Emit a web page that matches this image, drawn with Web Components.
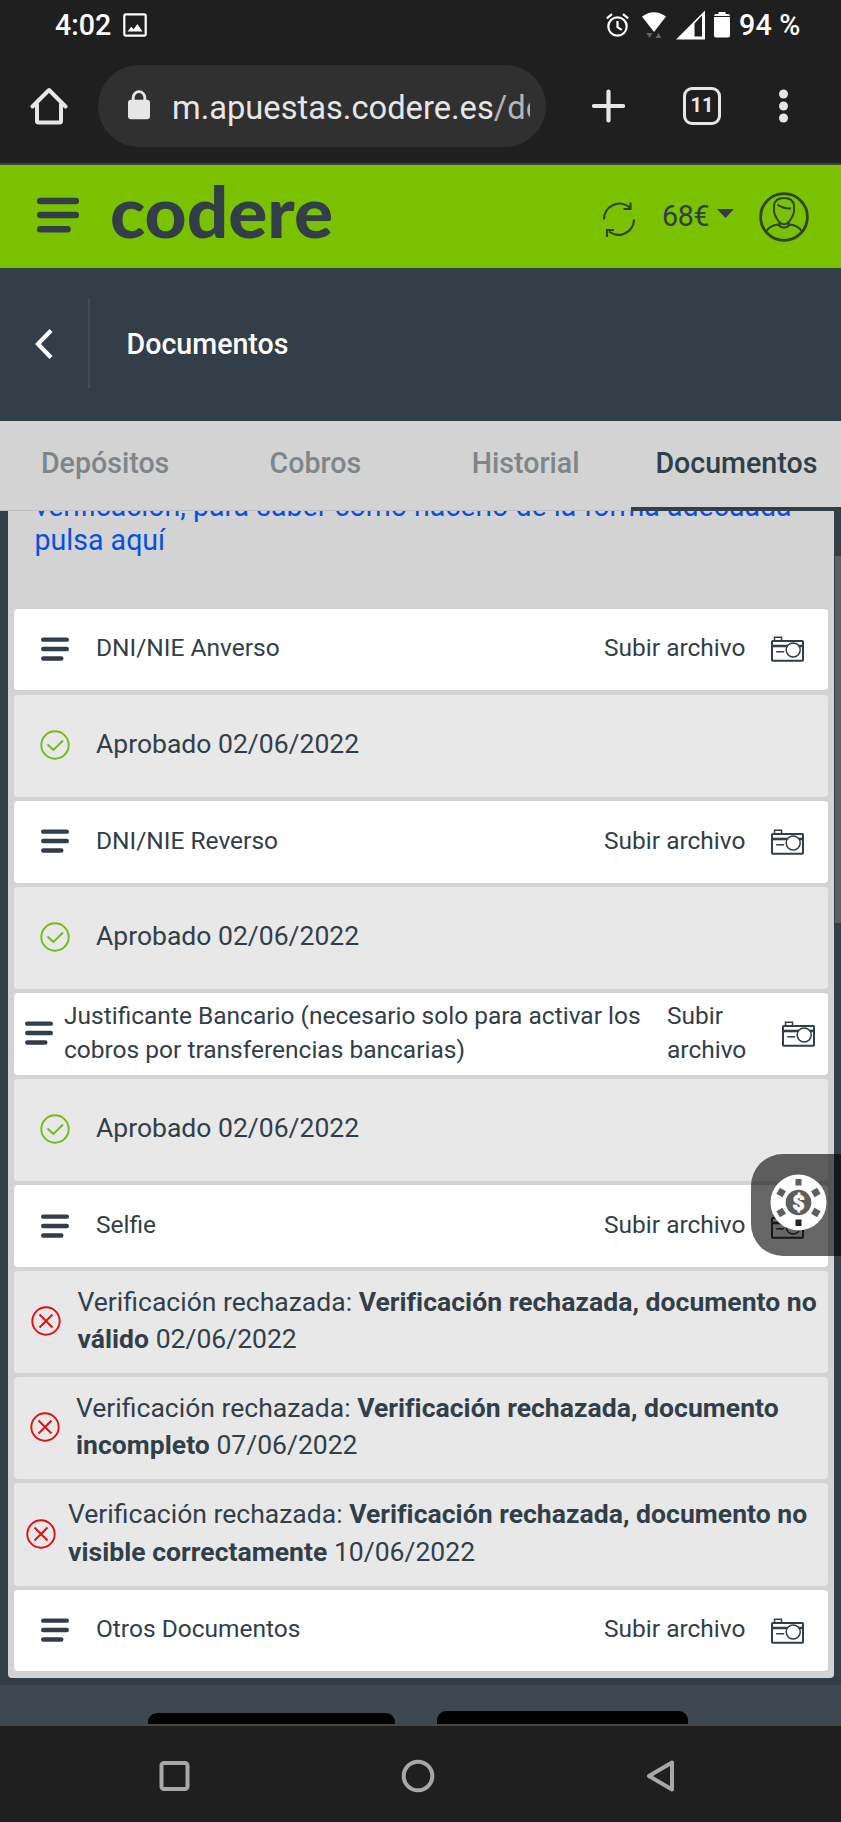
<!DOCTYPE html>
<html lang="es">
<head>
<meta charset="utf-8">
<title>Documentos</title>
<style>
html,body{margin:0;padding:0;background:#1f1f1f}
body{width:841px;height:1822px;overflow:hidden;font-family:Roboto,"Liberation Sans",sans-serif;color:#323e48}
</style>
</head>
<body>
<phone-screen></phone-screen>
<script>
function define(name, html){
  const t=document.createElement('template');t.innerHTML=html;
  customElements.define(name,class extends HTMLElement{
    constructor(){super();this.attachShadow({mode:'open'}).appendChild(t.content.cloneNode(true));}
  });
}

define('status-bar',`<style>
:host{display:flex;height:52px;align-items:center;color:#fff;font-weight:500;font-size:28.6px;box-sizing:border-box;padding:0 41px 2px 55px}
svg{display:block;flex:none}
.pic{margin-left:12px}.sp{flex:1}
.al{margin-right:12px}.wf{margin-right:8px}.sg{margin-right:7px}.bt{margin-right:8px}
span{line-height:34px;white-space:nowrap}.p{width:61px;letter-spacing:.2px}
</style>
<span>4:02</span>
<svg class="pic" width="24" height="24" viewBox="0 0 24 24"><rect x="1.3" y="1.3" width="21.4" height="21.4" rx="1.6" fill="none" stroke="#fff" stroke-width="2.2"/><path fill="#fff" d="M4.5 18.500l3.700-4.700 2.500 2.500 3.700-5.300 5.100 7.500z"/></svg>
<div class="sp"></div>
<svg class="al" width="23" height="24" viewBox="0 0 23 24" fill="none" stroke="#fff" stroke-width="2.2"><circle cx="11.500" cy="13.500" r="9.200"/><path d="M11.500 8v6.200l4.300 2.700M.8 5.300L6 1.200M22.200 5.300L17 1.200"/></svg>
<svg class="wf" width="26" height="28" viewBox="0 0 26 28"><path fill="#fff" d="M1 5.500Q13-3 25 5.500L13 21z"/><path fill="#666" d="M5.500 22h6l-3 5zM14.500 27h6l-3-5z"/></svg>
<svg class="sg" width="31" height="30" viewBox="0 0 31 30"><path fill="#fff" fill-rule="evenodd" d="M30 .5v29H1zM19.500 13.500v13H27V5.500z"/></svg>
<svg class="bt" width="18" height="28" viewBox="0 0 18 28"><path fill="#fff" d="M5.500 1h7v2H15q2 0 2 2H1q0-2 2-2h2.500zM1 6h16v18.500q0 2-2 2H3q-2 0-2-2z"/></svg>
<span class="p">94 %</span>`);

define('browser-bar',`<style>
:host{display:flex;height:113px;box-sizing:border-box;border-bottom:2px solid #3f4436;padding:13px 36px 0 30px;align-items:flex-start;color:#e6e6e6}
svg{display:block;flex:none}
.home{margin:22px 30px 0 0}
.pill{width:448px;height:82px;border-radius:41px;background:#303030;display:flex;align-items:center;box-sizing:border-box;padding:0 16px 0 29px}
.lock{margin:-3px 21px 0 0}
.url{flex:1;overflow:hidden;white-space:nowrap;font-size:32.66px;line-height:44px;margin-top:3px}
.url i{font-style:normal;color:#b5b5b5}
.plus{margin:24px 0 0 46px}
.tabs{width:38px;height:38px;border:3.500px solid #e6e6e6;border-radius:9px;box-sizing:border-box;margin:22px 0 0 58px;font-weight:700;font-size:20px;line-height:31px;text-align:center;flex:none}
.more{margin:23px 0 0 57px}
</style>
<svg class="home" width="38" height="38" viewBox="0 0 38 38" fill="none" stroke="#e6e6e6" stroke-width="4" stroke-linecap="round" stroke-linejoin="round"><path d="M2.500 19.500L19 3l16.500 16.500M7 17v17q0 1.500 1.500 1.500h21q1.500 0 1.500-1.500V17"/></svg>
<div class="pill">
<svg class="lock" width="24" height="30" viewBox="0 0 24 30"><path d="M6.200 12V7.500a5.800 5.800 0 0 1 11.600 0V12" fill="none" stroke="#e6e6e6" stroke-width="2.800"/><rect x="1" y="9.800" width="22" height="19.500" rx="3" fill="#e6e6e6"/></svg>
<div class="url">m.apuestas.codere.es<i>/do</i></div></div>
<svg class="plus" width="33" height="34" viewBox="0 0 33 34"><path d="M16.500 2.500v29M2 17h29" stroke="#e6e6e6" stroke-width="4.200" stroke-linecap="round"/></svg>
<div class="tabs">11</div>
<svg class="more" width="11" height="36" viewBox="0 0 11 36" fill="#e6e6e6"><circle cx="5.500" cy="6" r="4.500"/><circle cx="5.500" cy="18" r="4.500"/><circle cx="5.500" cy="30" r="4.500"/></svg>`);

define('bars-icon',`<style>:host{display:block;flex:none;width:var(--bars,28px)}svg{display:block;width:100%}</style>
<svg viewBox="0 0 42 36" stroke="#323e48" stroke-width="6.600" stroke-linecap="round"><path d="M3.300 4H38.700M3.300 18H38.700M3.300 32.300H30.500"/></svg>`);

define('site-header',`<style>
:host{display:flex;height:102.500px;background:#7ac200;align-items:flex-start;--bars:42px}
svg{display:block;flex:none}
bars-icon{margin:32px 0 0 37px}
.logo{margin:3px 0 0 32px}
.sync{margin:36px 0 0 267px}
.money{font-size:28.6px;line-height:34px;margin:34px 0 0 26px;width:55px;white-space:nowrap;letter-spacing:-.3px}
.car{margin:43.500px 0 0 0}
.user{margin:26.500px 0 0 25px}
</style>
<bars-icon></bars-icon>
<svg class="logo" width="224" height="92" viewBox="0 0 224 92"><text x="-1" y="70" font-family="Lato,Inter,sans-serif" font-weight="900" font-size="71" textLength="223" lengthAdjust="spacingAndGlyphs" fill="#323e48">codere</text></svg>
<svg class="sync" width="34" height="37" viewBox="0 0 34 37" fill="none" stroke="#2f4530" stroke-width="2.200"><path d="M2 18.500A15.500 15.500 0 0 1 27.500 6.300M32 18.500A15.500 15.500 0 0 1 7 30.500M28.500 1.500V8h-7M5 36V29h7"/></svg>
<div class="money">68€</div>
<svg class="car" width="17" height="10" viewBox="0 0 17 10"><path d="M0 0h17L8.500 9z" fill="#323e48"/></svg>
<svg class="user" width="50" height="50" viewBox="0 0 50 50" fill="none" stroke="#2f4530"><circle cx="25" cy="25" r="23.400" stroke-width="2.800"/><g stroke-width="2"><path d="M15 20V13.500Q16 6 25 6t10 7.500V20Q33 27 28.500 31.200Q25 33.500 21.500 31.200Q17 27 15 20z"/><path d="M18.500 12.500Q23 16.500 32 16.500M20.500 31v3q4.500 3 9 0v-3M7.500 39Q11 33.500 19 32.500Q25 39 31 32.500Q39 33.500 42.500 39"/></g></svg>`);

define('page-title',`<style>
:host{display:flex;height:153.500px;background:#323e48;align-items:center;color:#fff;font-weight:500;font-size:28.6px}
svg{display:block;margin:-1px 0 0 34px}
.sep{width:2px;height:89px;background:#434e57;margin:-1px 36.500px 0 35px}
.t{padding-bottom:1.500px}
</style>
<svg width="19" height="32" viewBox="0 0 19 32"><path d="M17 2.500L4 16l13 13.500" fill="none" stroke="#fff" stroke-width="4.200"/></svg>
<div class="sep"></div><div class="t"><slot></slot></div>`);

define('tab-bar',`<style>
:host{display:grid;grid-template-columns:repeat(4,1fr);height:90px;background:#d3d3d3;box-sizing:border-box}
div{box-sizing:border-box;border-bottom:1px solid #bdbfc0;text-align:center;font-weight:500;font-size:28.6px;line-height:85px;color:#7e868b}
.on{color:#323e48;border-bottom:4px solid #323e48;padding-left:1px}
</style><div>Depósitos</div><div>Cobros</div><div>Historial</div><div class="on">Documentos</div>`);

define('camera-icon',`<style>:host{display:block;flex:none;width:33px;height:26px}svg{display:block}</style>
<svg width="33" height="26" viewBox="0 0 33 26" fill="none" stroke="#323e48"><rect x="1" y="5" width="31" height="19.800" rx=".8" stroke-width="2"/><path d="M3.500 4.500V1.200h7v3.300" stroke-width="1.500"/><path d="M1.500 10h30" stroke-width="2.600"/><path d="M5.200 15.800h8" stroke-width="1.500"/><circle cx="22.200" cy="14" r="7" fill="#fff" stroke-width="1.500"/></svg>`);

define('doc-row',`<style>
:host{display:flex;align-items:center;height:81.800px;box-sizing:border-box;margin-bottom:4.200px;background:#fff;border-radius:4px;font-size:24.500px;line-height:34.300px;padding:0 24.500px 0 27px;white-space:nowrap}
bars-icon{margin-top:-1px}
.t{margin-left:27px;flex:1;padding-bottom:2px}
.a{padding-bottom:2px;margin-right:25px}
camera-icon{margin-top:0}
:host([wide]){padding:0 13px 0 11px}
:host([wide]) .t{margin-left:11px}
:host([wide]) .a{width:79px;white-space:normal;margin-right:36px}
</style><bars-icon></bars-icon><div class="t"><slot></slot></div><div class="a">Subir archivo</div><camera-icon></camera-icon>`);

define('status-row',`<style>
:host{display:flex;align-items:center;height:102.200px;box-sizing:border-box;margin-bottom:4px;background:#e8e8e8;border-radius:4px;font-size:26.530px;line-height:37.200px;white-space:nowrap;padding:0 0 2px var(--pad,26px)}
svg{display:block;flex:none}
.t{margin-left:var(--gap,26px);padding-bottom:2px}
.no{display:none}
:host([bad]) .no{display:block}
:host([bad]) .ok{display:none}
::slotted(b){letter-spacing:.035px}
</style>
<svg class="ok" width="30" height="30" viewBox="0 0 30 30" fill="none" stroke="#74b81c" stroke-width="1.900"><circle cx="15" cy="15" r="13.700"/><path d="M7.500 14.500l6 5.500 9.500-9.500"/></svg>
<svg class="no" width="30" height="30" viewBox="0 0 30 30" fill="none" stroke="#e00f12" stroke-width="1.900"><circle cx="15" cy="15" r="13.700"/><path d="M8.500 8.500l13 13M21.500 8.500l-13 13"/></svg>
<div class="t"><slot></slot></div>`);

define('docs-panel',`<style>
:host{display:block;height:1174px;overflow:hidden;background:#323e48;position:relative}
.panel{margin:0 7px 0 8px;height:1166.500px;box-sizing:border-box;background:#d3d3d3;border-radius:0 0 4px 4px;padding:0 6px;overflow:hidden}
p{margin:-22px 0 51.600px;padding-left:20.500px;color:#0a50e0;font-size:28.570px;line-height:34px;white-space:nowrap}
.thumb{position:absolute;right:0;top:45px;width:6px;height:367px;background:#5b5f64}
</style>
<div class="panel">
<p>verificación, para saber como hacerlo de la forma adecuada<br>pulsa aquí</p>
<doc-row>DNI/NIE Anverso</doc-row>
<status-row>Aprobado 02/06/2022</status-row>
<doc-row>DNI/NIE Reverso</doc-row>
<status-row>Aprobado 02/06/2022</status-row>
<doc-row wide>Justificante Bancario (necesario solo para activar los<br>cobros por transferencias bancarias)</doc-row>
<status-row>Aprobado 02/06/2022</status-row>
<doc-row>Selfie</doc-row>
<status-row bad style="--pad:16.500px;--gap:17px">Verificación rechazada: <b>Verificación rechazada, documento no<br>válido</b> 02/06/2022</status-row>
<status-row bad style="--pad:16px;--gap:16px">Verificación rechazada: <b>Verificación rechazada, documento<br>incompleto</b> 07/06/2022</status-row>
<status-row bad style="--pad:12px;--gap:12px">Verificación rechazada: <b>Verificación rechazada, documento no<br>visible correctamente</b> 10/06/2022</status-row>
<doc-row>Otros Documentos</doc-row>
</div><div class="thumb"></div>`);

define('site-footer',`<style>
:host{display:flex;align-items:flex-end;height:41px;box-sizing:border-box;background:#3d4952;border-bottom:2px solid #474846;padding-left:148px;gap:42px}
div{background:#000;border-radius:9px 9px 0 0}
.a{width:247px;height:11px}.b{width:251px;height:13px}
</style><div class="a"></div><div class="b"></div>`);

define('nav-bar',`<style>
:host{display:flex;height:97px;box-sizing:border-box;background:#1f1f1f;align-items:flex-start;padding:33.500px 0 0 159px}
svg{display:block;flex:none}
</style>
<svg width="31" height="32" viewBox="0 0 31 32" fill="none" stroke="#a8a8a8" stroke-width="4"><rect x="2.500" y="3" width="26" height="26" rx="2.500"/></svg>
<svg width="34" height="34" viewBox="0 0 34 34" style="margin:-1px 0 0 211px" fill="none" stroke="#a8a8a8" stroke-width="4"><circle cx="17" cy="17" r="14.300"/></svg>
<svg width="30" height="34" viewBox="0 0 30 34" style="margin:-1px 0 0 211px" fill="none" stroke="#a8a8a8" stroke-width="4" stroke-linejoin="round"><path d="M26 3.500v27L3 17z"/></svg>`);

define('casino-chip',`<style>
:host{position:absolute;right:0;top:1154px;width:90.500px;height:102px;border-radius:32px 0 0 32px;background:rgba(0,0,0,.6);display:flex;box-sizing:border-box;padding:19.500px 0 0 19px}
</style>
<svg width="57" height="57" viewBox="-28.500 -28.500 57 57"><circle r="28" fill="#fff"/><g fill="#5e5e5e"><rect x="-3" y="-23.500" width="6" height="6.500"/><rect x="-3.500" y="-23.500" width="7" height="7" transform="rotate(60)"/><rect x="-3.500" y="-23.500" width="7" height="7" transform="rotate(120)"/><rect x="-3" y="-23.500" width="6" height="6.500" transform="rotate(180)" fill="#222"/><rect x="-3.500" y="-23.500" width="7" height="7" transform="rotate(240)"/><rect x="-3.500" y="-23.500" width="7" height="7" transform="rotate(300)"/><circle r="12.800"/></g><text y="7.500" text-anchor="middle" font-family="Roboto,sans-serif" font-weight="900" font-size="21" fill="#fff" stroke="#fff" stroke-width=".8">$</text></svg>`);

define('phone-screen',`<style>:host{display:flex;flex-direction:column;position:relative;width:841px;height:1822px;overflow:hidden}
:host>*{flex:none}</style>
<status-bar></status-bar><browser-bar></browser-bar><site-header></site-header>
<page-title>Documentos</page-title><tab-bar></tab-bar><docs-panel></docs-panel>
<site-footer></site-footer><nav-bar></nav-bar><casino-chip></casino-chip>`);
</script>
</body>
</html>
